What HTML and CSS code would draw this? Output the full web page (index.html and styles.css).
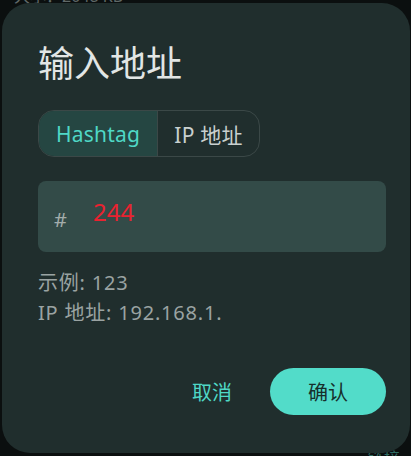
FILE: index.html
```html
<!DOCTYPE html>
<html lang="zh-CN">
<head>
<meta charset="utf-8">
<link rel="stylesheet" href="styles.css">
</head>
<body>
<div class="backdrop-text">大小：2048 KB</div>
<div class="dialog">
  <h1 class="title">输入地址</h1>
  <div class="segmented">
    <div class="seg seg-active">Hashtag</div>
    <div class="seg">IP 地址</div>
  </div>
  <div class="field">
    <span class="prefix">#</span>
    <span class="value">244</span>
  </div>
  <div class="hints">
    <div>示例: 123</div>
    <div>IP 地址: 192.168.1.</div>
  </div>
  <div class="actions">
    <div class="btn-text">取消</div>
    <div class="btn-filled">确认</div>
  </div>
</div>
<div class="backdrop-bottom">链接</div>
</body>
</html>
```

FILE: styles.css
```css
html, body {
  margin: 0;
  padding: 0;
  width: 411px;
  height: 456px;
  overflow: hidden;
  background: #0b0f0f;
  font-family: "Noto Sans", "Noto Sans CJK SC", sans-serif;
  position: relative;
}
.backdrop-text {
  position: absolute;
  left: 14px;
  top: -12px;
  font-size: 16px;
  color: #5f6867;
  line-height: 16px;
}
.backdrop-bottom {
  position: absolute;
  left: 368px;
  top: 450px;
  font-size: 16px;
  color: #2f6b63;
  line-height: 16px;
}
.dialog {
  margin: 3px 0 0 2px;
  width: 408px;
  height: 450px;
  box-sizing: border-box;
  background: #202e2d;
  border-radius: 28px;
  padding: 35px 24px 0 36px;
  display: flex;
  flex-direction: column;
  position: relative;
  z-index: 1;
}
.title {
  margin: 0;
  font-family: "Noto Sans CJK SC", sans-serif;
  font-weight: 400;
  font-size: 36px;
  line-height: 46px;
  color: #e2e6e5;
}
.segmented {
  margin-top: 26px;
  display: flex;
  align-self: flex-start;
  border: 1px solid #3b4847;
  border-radius: 16px;
  overflow: hidden;
  height: 47px;
  box-sizing: border-box;
}
.seg {
  display: flex;
  align-items: center;
  justify-content: center;
  font-size: 21px;
  color: #c9d0cf;
  padding: 0 12px;
  letter-spacing: 0.2px;
}
.seg-active {
  background: #254642;
  color: #4fd8c6;
  width: 119px;
  box-sizing: border-box;
  border-right: 1px solid #3b4847;
}
.seg:not(.seg-active) {
  width: 101px;
  box-sizing: border-box;
}
.field {
  margin-top: 24px;
  height: 71px;
  background: #334b48;
  border-radius: 8px;
  display: flex;
  align-items: center;
  padding: 0 16px;
}
.prefix {
  font-size: 20px;
  color: #a3adab;
  margin-top: 6px;
  width: 39px;
}
.value {
  font-size: 24px;
  color: #ea2230;
  margin-top: -10px;
}
.hints {
  margin-top: 16px;
  font-size: 20px;
  line-height: 30px;
  color: #9aa3a2;
  letter-spacing: 0.8px;
}
.actions {
  margin-top: 40px;
  display: flex;
  justify-content: flex-end;
  align-items: center;
  gap: 38px;
}
.btn-text {
  font-size: 20px;
  color: #4fd8c6;
  font-family: "Noto Sans CJK SC", sans-serif;
}
.btn-filled {
  width: 116px;
  height: 47px;
  border-radius: 24px;
  background: #52dcc9;
  color: #17302c;
  font-size: 20px;
  font-family: "Noto Sans CJK SC", sans-serif;
  display: flex;
  align-items: center;
  justify-content: center;
}
```
